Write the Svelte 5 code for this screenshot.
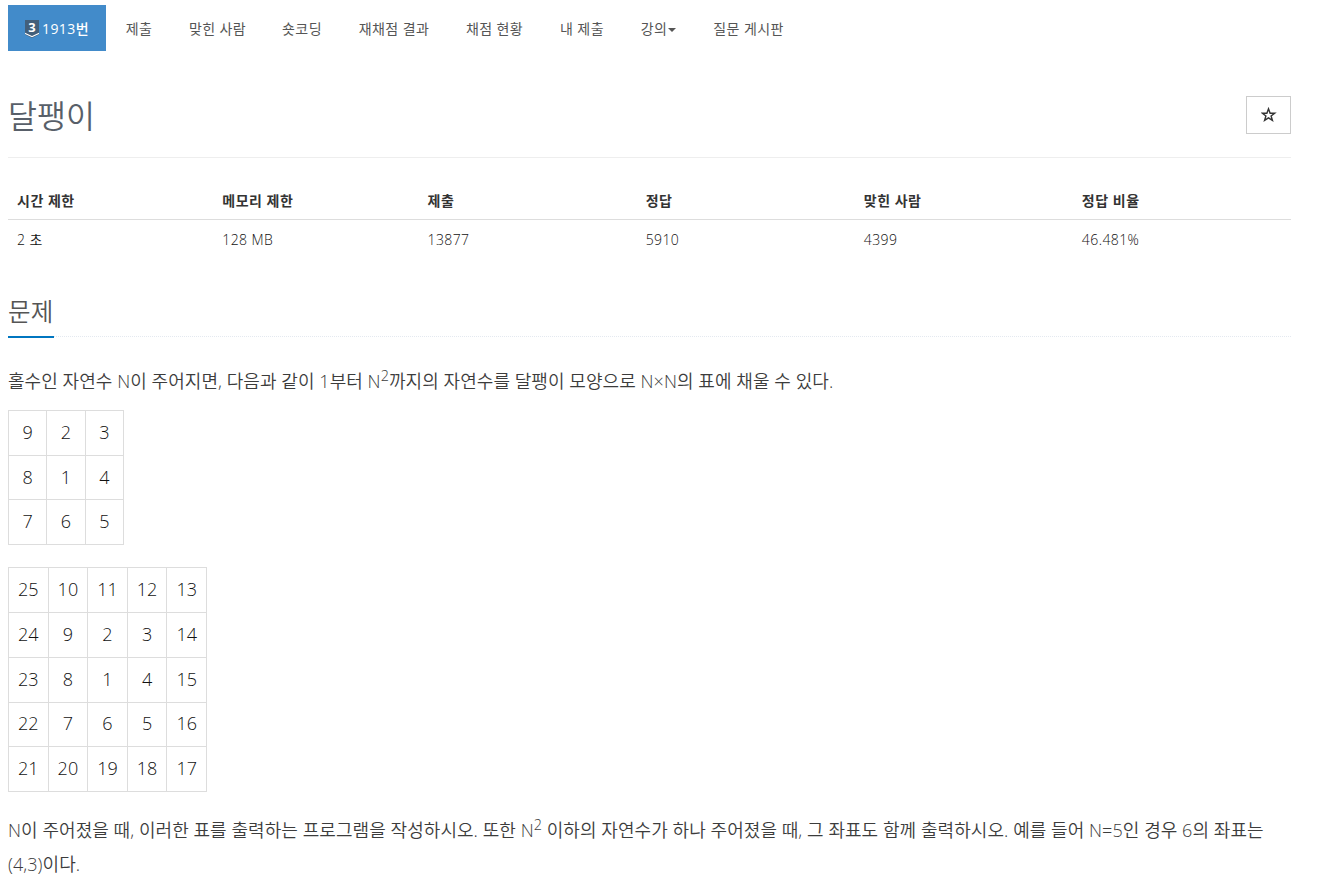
<script>
  const tabs = [
    { label: '제출', width: 66 },
    { label: '맞힌 사람', width: 91 },
    { label: '숏코딩', width: 78 },
    { label: '재채점 결과', width: 106 },
    { label: '채점 현황', width: 95 },
    { label: '내 제출', width: 80 },
    { label: '강의', width: 73, dropdown: true },
    { label: '질문 게시판', width: 107 }
  ];

  const info = [
    { title: '시간 제한', value: '2 초', width: 16 },
    { title: '메모리 제한', value: '128 MB', width: 16 },
    { title: '제출', value: '13877', width: 17 },
    { title: '정답', value: '5910', width: 17 },
    { title: '맞힌 사람', value: '4399', width: 17 },
    { title: '정답 비율', value: '46.481%', width: 17 }
  ];

  const small = [
    [9, 2, 3],
    [8, 1, 4],
    [7, 6, 5]
  ];

  const large = [
    [25, 10, 11, 12, 13],
    [24, 9, 2, 3, 14],
    [23, 8, 1, 4, 15],
    [22, 7, 6, 5, 16],
    [21, 20, 19, 18, 17]
  ];

  let starred = $state(false);
</script>

{#snippet grid(rows, kind)}
  <table class="grid {kind}">
    <tbody>
      {#each rows as row}
        <tr>
          {#each row as cell}
            <td>{cell}</td>
          {/each}
        </tr>
      {/each}
    </tbody>
  </table>
{/snippet}

<div class="container">
  <nav class="tabs">
    <a class="tab active" href="#problem">
      <svg class="tier" viewBox="0 0 14 18" width="14" height="18">
        <path d="M0 0h14v14.5L7 18l-7-3.5z" fill="#435f7a" />
        <path d="M0 12.8l7 3.2 7-3.2v1.3l-7 3.2-7-3.2z" fill="#fff" />
        <text x="7" y="11.5" text-anchor="middle">3</text>
      </svg>
      <span>1913번</span>
    </a>
    {#each tabs as tab}
      <a class="tab" href="#tab" style="width: {tab.width}px">
        <span>{tab.label}</span>
        {#if tab.dropdown}<i class="caret"></i>{/if}
      </a>
    {/each}
  </nav>

  <header class="page-header">
    <h1>달팽이</h1>
    <button class="star" aria-label="star" onclick={() => (starred = !starred)}>
      <svg viewBox="0 0 16 16" width="16" height="16">
        <path d="M7.5 1.8l1.6 4.4h4.6l-3.6 2.8 1.3 4.4-3.9-2.6-3.9 2.6L4.9 9 1.3 6.2h4.6z" fill={starred ? '#333' : 'none'} stroke="#333" stroke-width="1.4" />
      </svg>
    </button>
  </header>

  <table class="info">
    <thead>
      <tr>
        {#each info as col}
          <th style="width: {col.width}%">{col.title}</th>
        {/each}
      </tr>
    </thead>
    <tbody>
      <tr>
        {#each info as col}
          <td>{col.value}</td>
        {/each}
      </tr>
    </tbody>
  </table>

  <section>
    <div class="headline"><h2>문제</h2></div>
    <div class="description">
      <p>홀수인 자연수 N이 주어지면, 다음과 같이 1부터 N<sup>2</sup>까지의 자연수를 달팽이 모양으로 N×N의 표에 채울 수 있다.</p>
      {@render grid(small, 'small')}
      {@render grid(large, 'large')}
      <p>N이 주어졌을 때, 이러한 표를 출력하는 프로그램을 작성하시오. 또한 N<sup>2</sup> 이하의 자연수가 하나 주어졌을 때, 그 좌표도 함께 출력하시오. 예를 들어 N=5인 경우 6의 좌표는 (4,3)이다.</p>
    </div>
  </section>
</div>

<style>
  :global(body) {
    background: #fff;
    overflow: hidden;
  }

  .container {
    box-sizing: border-box;
    width: 1299px;
    padding: 5px 8px 0;
    font-family: 'Open Sans', 'Noto Sans CJK KR', sans-serif;
    font-size: 14px;
    line-height: 20px;
    color: #333;
  }

  .tabs {
    display: flex;
    height: 46px;
  }

  .tab {
    display: flex;
    align-items: center;
    justify-content: center;
    box-sizing: border-box;
    padding-top: 1px;
    color: #555;
    font-size: 14px;
    letter-spacing: 0.4px;
    text-decoration: none;
    white-space: nowrap;
  }

  .tab.active {
    gap: 3px;
    width: 98px;
    background: #428bca;
    color: #fff;
    font-weight: 500;
    letter-spacing: 0.4px;
  }

  .tier text {
    fill: #fff;
    font-size: 13px;
    font-weight: 700;
    letter-spacing: 0;
  }

  .caret {
    border-top: 4px solid #555;
    border-left: 4px solid transparent;
    border-right: 4px solid transparent;
    margin: 2px 0 0 1px;
  }

  .page-header {
    display: flex;
    justify-content: space-between;
    align-items: flex-start;
    box-sizing: border-box;
    height: 107px;
    padding-top: 45px;
    border-bottom: 1px solid #eee;
  }

  h1 {
    margin: 0;
    color: #585f69;
    font-size: 31.5px;
    font-weight: 350;
    line-height: 39px;
  }

  .star {
    display: grid;
    place-items: center;
    width: 45px;
    height: 38px;
    padding: 0;
    border: 1px solid #ccc;
    background: #fff;
    cursor: pointer;
  }

  table {
    border-collapse: collapse;
  }

  .info {
    width: 100%;
    margin-top: 23px;
    table-layout: fixed;
  }

  .info th,
  .info td {
    height: 38px;
    padding: 0 9px;
    box-sizing: border-box;
    text-align: left;
  }

  .info th {
    padding: 2px 9px 0;
    border-bottom: 1px solid #ddd;
    font-size: 14px;
    font-weight: 700;
    letter-spacing: 0.5px;
  }

  .info td {
    padding: 4px 9px 0;
    color: #111;
    font-weight: 350;
    letter-spacing: 0.4px;
  }

  .headline {
    display: flex;
    height: 42px;
    margin-top: 37px;
    border-bottom: 1px dotted #e4e9f0;
  }

  h2 {
    height: 41px;
    margin: 0;
    padding-top: 1px;
    border-bottom: 2px solid #0076c0;
    color: #555;
    font-size: 24.5px;
    font-weight: 350;
    line-height: 33px;
    letter-spacing: 0.3px;
  }

  .description {
    padding-top: 27px;
    color: #3c3c3c;
    font-size: 18px;
    font-weight: 350;
    line-height: 34px;
  }

  p {
    margin: 0;
    letter-spacing: 0.06px;
    word-break: keep-all;
  }

  sup {
    position: relative;
    top: -0.5em;
    font-size: 80%;
    line-height: 0;
    vertical-align: baseline;
  }

  .grid {
    table-layout: fixed;
    color: #111;
  }

  .grid td {
    box-sizing: border-box;
    height: 44.7px;
    padding: 0 0 2px;
    border: 1px solid #ddd;
    text-align: center;
    line-height: 24px;
  }

  .small {
    width: 116px;
    margin-top: 12px;
  }

  .large {
    width: 199px;
    margin: 22.4px 0 21.6px;
  }
</style>
